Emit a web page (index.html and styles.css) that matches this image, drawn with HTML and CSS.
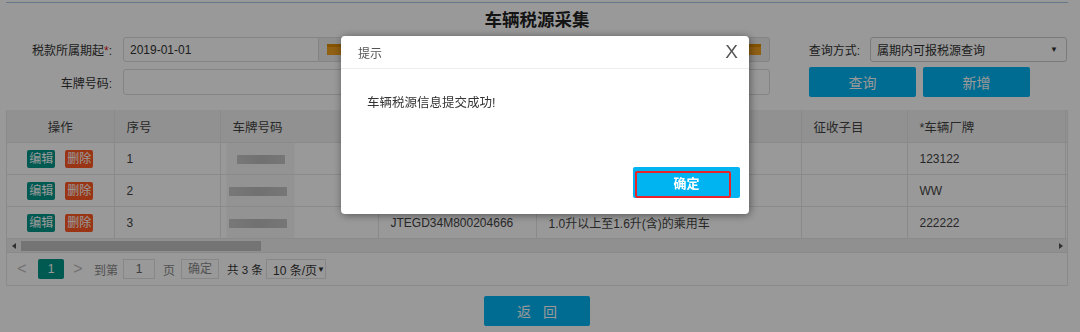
FILE: index.html
```html
<!DOCTYPE html>
<html lang="zh-CN">
  <head>
    <meta charset="UTF-8" />
    <title>车辆税源采集</title>
    <link rel="stylesheet" href="styles.css">
  </head>
  <body>
    <div class="page">
      <div class="topline"></div>
      <h2 class="title">车辆税源采集</h2>

      <div class="form-row">
        <label class="lbl">税款所属期起<span class="req">*</span>:</label>
        <div class="date-field w1">
          <input type="text" value="2019-01-01" />
          <span class="addon"><span class="cal"></span></span>
        </div>
        <label class="lbl w2">税款所属期止<span class="req">*</span>:</label>
        <div class="date-field w3">
          <input type="text" value="2019-12-31" />
          <span class="addon"><span class="cal"></span></span>
        </div>
        <label class="lbl w4">查询方式:</label>
        <div class="select">属期内可报税源查询<span class="caret">▼</span></div>
      </div>

      <div class="form-row row2">
        <label class="lbl">车牌号码:</label>
        <input type="text" class="txt w1" />
        <label class="lbl w2">车辆识别代号:</label>
        <input type="text" class="txt w3" />
        <button class="btn btn-query">查询</button>
        <button class="btn">新增</button>
      </div>

      <div class="grid-box">
        <div class="grid-scroll">
          <table class="grid">
            <colgroup>
              <col style="width:107px" />
              <col style="width:106px" />
              <col style="width:158px" />
              <col style="width:158px" />
              <col style="width:265px" />
              <col style="width:106px" />
              <col style="width:158px" />
              <col style="width:200px" />
            </colgroup>
            <thead>
              <tr>
                <th class="center">操作</th>
                <th>序号</th>
                <th>车牌号码</th>
                <th>车辆识别代号</th>
                <th>征收品目</th>
                <th>征收子目</th>
                <th>*车辆厂牌</th>
                <th></th>
              </tr>
            </thead>
            <tbody>
              <tr>
                <td class="center"><span class="tag tag-edit">编辑</span><span class="tag tag-del">删除</span></td>
                <td>1</td>
                <td class="blur-cell"><span class="mosaic short"></span></td>
                <td>LSVAU2180N2183922</td>
                <td>1.0升以上至1.6升(含)的乘用车</td>
                <td></td>
                <td>123122</td>
                <td></td>
              </tr>
              <tr>
                <td class="center"><span class="tag tag-edit">编辑</span><span class="tag tag-del">删除</span></td>
                <td>2</td>
                <td class="blur-cell"><span class="mosaic"></span></td>
                <td>LFV2A21K9D4012345</td>
                <td></td>
                <td></td>
                <td>WW</td>
                <td></td>
              </tr>
              <tr>
                <td class="center"><span class="tag tag-edit">编辑</span><span class="tag tag-del">删除</span></td>
                <td>3</td>
                <td class="blur-cell"><span class="mosaic"></span></td>
                <td>JTEGD34M800204666</td>
                <td>1.0升以上至1.6升(含)的乘用车</td>
                <td></td>
                <td>222222</td>
                <td></td>
              </tr>
            </tbody>
          </table>
        </div>
        <div class="hscroll">
          <span class="arrow-l"></span>
          <span class="thumb"></span>
          <span class="arrow-r"></span>
        </div>
        <div class="pager">
          <span class="pg-arrow">&lt;</span>
          <span class="pg-cur">1</span>
          <span class="pg-arrow pg-next">&gt;</span>
          <span class="pg-txt">到第</span>
          <input type="text" class="pg-input" value="1" />
          <span class="pg-txt pg-unit">页</span>
          <span class="pg-btn">确定</span>
          <span class="pg-count">共 3 条</span>
          <span class="pg-size">10 条/页<span class="caret">▼</span></span>
        </div>
      </div>

      <div class="footer">
        <button class="btn btn-back">返 回</button>
      </div>
    </div>

    <div class="mask"></div>

    <div class="dialog">
      <div class="dlg-head">
        <span>提示</span>
        <span class="dlg-close">X</span>
      </div>
      <div class="dlg-body">车辆税源信息提交成功!</div>
      <div class="dlg-foot">
        <button class="dlg-ok">确定</button>
      </div>
    </div>
  </body>
</html>
```

FILE: styles.css
```css
body {
  margin: 0;
  background: #fff;
  font-family: "Liberation Sans", "Noto Sans CJK SC", sans-serif;
  font-size: 12px;
  color: #333;
  width: 1080px;
  height: 332px;
  overflow: hidden;
}

.page {
  padding: 0 12px 0 6px;
}

.topline {
  height: 2px;
  border-bottom: 1px solid #a9c6e4;
}

.title {
  margin: 0;
  height: 34px;
  line-height: 34px;
  text-align: center;
  font-size: 17.5px;
  font-weight: bold;
  color: #222;
}

.form-row {
  display: flex;
  align-items: center;
  height: 25px;
}

.row2 {
  height: 30px;
  margin-top: 5px;
}

.lbl {
  width: 117px;
  flex: none;
  box-sizing: border-box;
  padding-right: 11px;
  text-align: right;
  color: #333;
}

.req {
  color: #e02020;
}

.w1 { width: 227px; }
.w2 { width: 195px; }
.w3 { width: 225px; }
.w4 { width: 100px; padding-right: 10px; }

.date-field {
  display: flex;
  height: 25px;
  flex: none;
}

.date-field input,
.txt {
  flex: 1;
  min-width: 0;
  box-sizing: border-box;
  height: 25px;
  border: 1px solid #ddd;
  border-radius: 3px 0 0 3px;
  padding: 0 6px;
  font-family: inherit;
  font-size: 12px;
  color: #333;
  background: #fff;
}

.txt {
  flex: none;
  height: 26px;
  border-radius: 3px;
}

.addon {
  width: 30px;
  display: flex;
  align-items: center;
  justify-content: center;
  background: #eee;
  border: 1px solid #ddd;
  border-left: none;
  border-radius: 0 3px 3px 0;
}

.cal {
  width: 14px;
  height: 11px;
  background: #f0a020;
  border-top: 3px solid #e08a00;
  box-sizing: border-box;
}

.select {
  width: 197px;
  height: 25px;
  box-sizing: border-box;
  border: 1px solid #ccc;
  border-radius: 3px;
  padding: 0 8px 0 6px;
  display: flex;
  align-items: center;
  justify-content: space-between;
  background: #fff;
}

.caret {
  font-size: 8px;
  color: #333;
}

.btn {
  width: 107px;
  height: 30px;
  border: none;
  border-radius: 2px;
  background: #00b4f2;
  color: #fff;
  font-family: inherit;
  font-size: 14px;
  margin-left: 7px;
  padding: 0;
}

.btn-query {
  margin-left: 39px;
}

.grid-box {
  margin-top: 13px;
  border: 1px solid #e6e6e6;
  border-top: none;
}

.grid-scroll {
  overflow: hidden;
}

.grid {
  border-collapse: collapse;
  table-layout: fixed;
  width: 1258px;
}

.grid th,
.grid td {
  height: 31px;
  padding: 0 12px;
  border-right: 1px solid #e6e6e6;
  border-bottom: 1px solid #e6e6e6;
  text-align: left;
  font-weight: normal;
  white-space: nowrap;
  overflow: hidden;
  color: #444;
}

.grid th {
  background: #f2f2f2;
  height: 32px;
  font-size: 12.5px;
}

.grid .center {
  text-align: center;
}

.tag {
  display: inline-block;
  width: 28px;
  height: 18px;
  line-height: 18px;
  font-size: 12px;
  color: #fff;
  text-align: center;
  border-radius: 2px;
  vertical-align: middle;
}

.tag-edit {
  background: #009688;
}

.tag-del {
  background: #ff5722;
  margin-left: 10px;
}

.blur-cell {
  padding-left: 8px !important;
  background: linear-gradient(to right, transparent 6px, #f6f6f6 6px, #f6f6f6 74px, transparent 74px);
}

.mosaic {
  display: inline-block;
  width: 58px;
  height: 9px;
  background: linear-gradient(to right, #c8c8c8 0, #bcbcbc 50%, #c6c6c6 100%);
  vertical-align: middle;
}

.mosaic.short {
  width: 48px;
  margin-left: 8px;
}

.hscroll {
  height: 13px;
  background: #f1f1f1;
  display: flex;
  align-items: center;
  padding: 0 4px 0 5px;
  border-bottom: 1px solid #e6e6e6;
}

.arrow-l,
.arrow-r {
  width: 0;
  height: 0;
  border-top: 3px solid transparent;
  border-bottom: 3px solid transparent;
}

.arrow-l {
  border-right: 4px solid #505050;
}

.arrow-r {
  border-left: 4px solid #505050;
  margin-left: auto;
}

.thumb {
  width: 240px;
  height: 10px;
  background: #c1c1c1;
  margin-left: 5px;
}

.pager {
  height: 32px;
  display: flex;
  align-items: center;
  padding-left: 7px;
  color: #666;
  font-size: 12px;
  white-space: nowrap;
}

.pg-arrow {
  width: 16px;
  text-align: center;
  color: #bbb;
  font-size: 16px;
}

.pg-cur {
  width: 26px;
  height: 20px;
  line-height: 20px;
  text-align: center;
  background: #009688;
  color: #fff;
  border-radius: 2px;
  margin-left: 8px;
}

.pg-next {
  margin-left: 6px;
}

.pg-txt {
  margin: 0 5px 0 8px;
  color: #888;
}

.pg-input {
  width: 32px;
  height: 20px;
  box-sizing: border-box;
  border: 1px solid #e2e2e2;
  text-align: center;
  font-family: inherit;
  font-size: 12px;
  color: #666;
  padding: 0;
}

.pg-unit {
  margin: 0 6px 0 8px;
}

.pg-btn {
  width: 38px;
  height: 20px;
  line-height: 18px;
  box-sizing: border-box;
  text-align: center;
  border: 1px solid #e2e2e2;
  font-size: 12px;
  color: #888;
}

.pg-count {
  width: 31px;
  margin: 0 8px;
  color: #333;
  font-size: 11.5px;
}

.pg-size {
  width: 60px;
  height: 20px;
  box-sizing: border-box;
  border: 1px solid #e2e2e2;
  display: flex;
  align-items: center;
  justify-content: space-between;
  padding: 0 5px 0 6px;
  color: #333;
}

.footer {
  display: flex;
  justify-content: center;
  margin-top: 10px;
}

.btn-back {
  margin-left: 0;
  width: 106px;
  letter-spacing: 4px;
  padding-left: 4px;
}

/* modal layer */
.mask {
  position: fixed;
  inset: 0;
  background: rgba(0, 0, 0, 0.4);
}

.dialog {
  position: fixed;
  left: 341px;
  top: 36px;
  width: 408px;
  height: 178px;
  background: #fff;
  border-radius: 4px;
  box-shadow: 1px 1px 8px rgba(0, 0, 0, 0.45);
  display: flex;
  flex-direction: column;
}

.dlg-head {
  height: 32px;
  border-bottom: 1px solid #eee;
  display: flex;
  align-items: center;
  justify-content: space-between;
  padding: 0 11px 0 17px;
  color: #555;
  font-size: 12px;
}

.dlg-close {
  font-size: 19px;
  color: #555;
  font-family: "Liberation Sans", sans-serif;
}

.dlg-body {
  flex: 1;
  padding: 24px 26px 0;
  font-size: 12.5px;
  line-height: 20px;
  color: #333;
}

.dlg-foot {
  display: flex;
  justify-content: flex-end;
  padding: 0 9px 16px 0;
}

.dlg-ok {
  position: relative;
  width: 107px;
  height: 31px;
  border: none;
  border-radius: 2px;
  background: #00b4f2;
  color: #fff;
  font-family: inherit;
  font-size: 13px;
  font-weight: bold;
  padding: 0;
}

.dlg-ok::after {
  content: "";
  position: absolute;
  left: 2px;
  top: 4px;
  width: 96px;
  height: 27px;
  box-sizing: border-box;
  border: 2px solid #e8232a;
  border-radius: 2px;
}
```
